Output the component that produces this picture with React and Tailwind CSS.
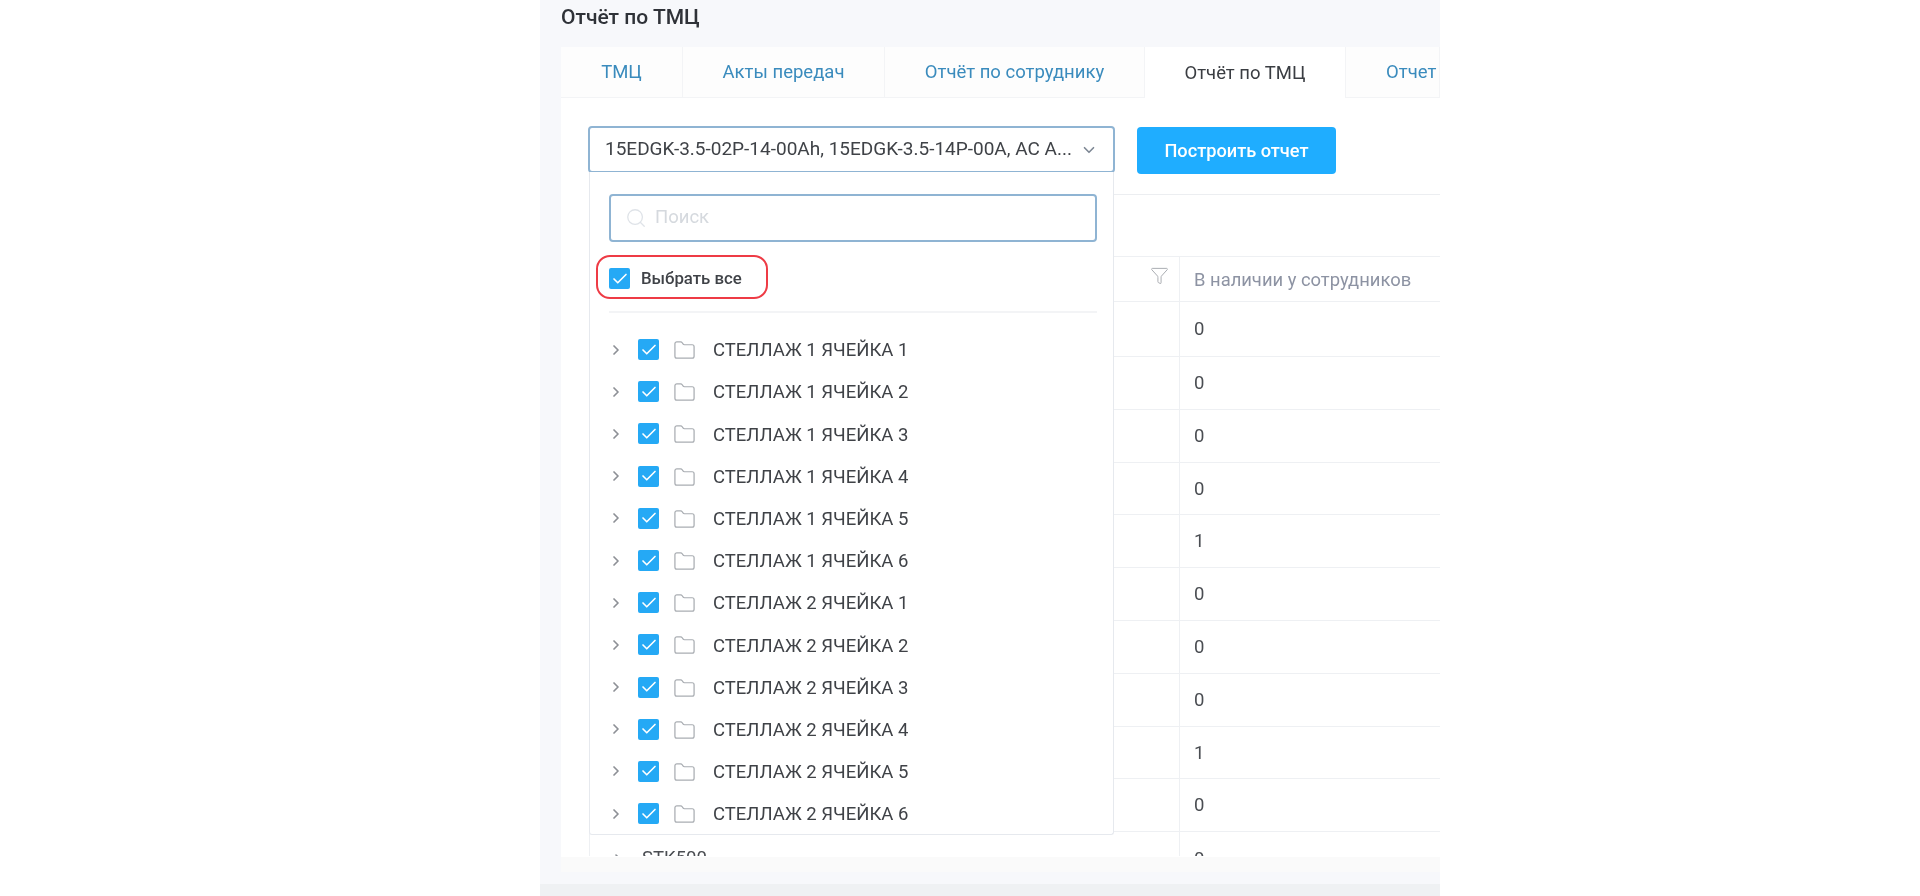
import React from "react";
import { ChevronDown, ChevronRight, Folder, Funnel, Search, Check } from "lucide-react";

const tabs = [
  { label: "ТМЦ", width: "w-[122px] justify-center" },
  { label: "Акты передач", width: "w-[202px] justify-center" },
  { label: "Отчёт по сотруднику", width: "w-[260px] justify-center" },
  { label: "Отчёт по ТМЦ", width: "w-[201px] justify-center", active: true },
  { label: "Отчет", width: "w-[94px] pl-[40px]" },
];

const values = [0, 0, 0, 0, 1, 0, 0, 0, 1, 0];

const shelves = [1, 2].flatMap((shelf) =>
  [1, 2, 3, 4, 5, 6].map((cell) => `СТЕЛЛАЖ ${shelf} ЯЧЕЙКА ${cell}`)
);

function Checkbox() {
  return (
    <span className="flex h-[21px] w-[21px] shrink-0 items-center justify-center rounded-[2px] bg-[#25a9f5]">
      <Check size={18} strokeWidth={2.2} className="text-white" />
    </span>
  );
}

function ShelfRow({ name }) {
  return (
    <div className="flex h-[42.2px] items-center">
      <ChevronRight size={16} strokeWidth={2.6} className="mb-[3px] ml-[-1px] shrink-0 text-[#8d9096]" />
      <span className="mb-[3px] ml-[14px]">
        <Checkbox />
      </span>
      <Folder size={23} strokeWidth={1.3} className="mb-[1px] ml-[14px] shrink-0 text-[#a9adb2]" />
      <span className="ml-[17px] text-[18.5px] text-[#3f4247]">{name}</span>
    </div>
  );
}

function Dropdown() {
  return (
    <div className="absolute left-0 top-[46px] z-10 h-[663px] w-[525px] rounded-b-[3px] border border-t-0 border-[#e6e9ee] bg-white px-[19px] pt-[22px]">
      <div className="flex h-[48px] w-[488px] items-center rounded-[4px] border-2 border-[#8fb4d3] pl-[14px]">
        <Search size={22} strokeWidth={1.4} className="text-[#dfe3e8]" />
        <span className="ml-[8px] text-[18.5px] text-[#d5d9de]">Поиск</span>
      </div>
      <div className="relative mt-[26px] flex h-[21px] items-center">
        <Checkbox />
        <span className="ml-[11px] text-[16.8px] font-medium text-[#3f4247]">Выбрать все</span>
        <div className="absolute left-[-13px] top-[-13px] h-[44px] w-[172px] rounded-[14px] border-2 border-[#ee3b45]" />
      </div>
      <div className="mt-[22px] h-[2px] w-[488px] bg-[#f3f4f6]" />
      <div className="mt-[17px]">
        {shelves.map((name) => (
          <ShelfRow key={name} name={name} />
        ))}
      </div>
    </div>
  );
}

function Table() {
  return (
    <div className="mt-[61px] h-[600px] overflow-hidden border-l border-t border-[#eef0f3] text-[#4a4d52]">
      <div className="flex h-[45px] border-b border-[#eef0f3]">
        <div className="flex w-[589px] shrink-0 items-start justify-end pr-[10px] pt-[9px]">
          <Funnel size={19} strokeWidth={1.2} className="text-[#a5a9ae]" />
        </div>
        <div className="flex items-center border-l border-[#eef0f3] pl-[14px] pt-[2px] text-[18.4px] text-[#8d93a3]">
          В наличии у сотрудников
        </div>
      </div>
      {values.map((value, i) => (
        <div key={i} className={`flex border-b border-[#eef0f3] ${i === 0 ? "h-[55px]" : "h-[52.8px]"}`}>
          <div className="w-[589px] shrink-0" />
          <div className="flex items-center border-l border-[#eef0f3] pl-[14px] pt-[2px] text-[18.5px]">{value}</div>
        </div>
      ))}
      <div className="flex h-[52.8px]">
        <div className="flex w-[589px] shrink-0 items-center pl-[20px]">
          <ChevronRight size={16} strokeWidth={2.4} className="text-[#8d9096]" />
          <span className="ml-[16px] text-[18.5px]">STK500</span>
        </div>
        <div className="flex items-center border-l border-[#eef0f3] pl-[14px] pt-[2px] text-[18.5px]">0</div>
      </div>
    </div>
  );
}

export default function App() {
  return (
    <div className="h-[896px] overflow-hidden bg-white pl-[540px] font-['Roboto',sans-serif]">
      <div className="flex h-full w-[900px] flex-col bg-[#f7f8fb] blur-[0.6px]">
        <h1 className="flex h-[47px] shrink-0 items-start pl-[21px] pt-[4px] text-[21px] font-medium leading-[26px] text-[#2f3238]">
          Отчёт по ТМЦ
        </h1>
        <div className="ml-[21px] flex h-[825px] shrink-0 flex-col overflow-hidden bg-white">
          <div className="flex h-[51px] shrink-0">
            {tabs.map((tab) => (
              <div
                key={tab.label}
                className={`flex shrink-0 items-center whitespace-nowrap border-r pt-[2px] text-[18.5px] ${tab.width} ${
                  tab.active
                    ? "border-[#f3f4f6] bg-white text-[#3a3d42]"
                    : "border-[#f3f4f6] border-b border-b-[#f3f4f6] bg-[#fdfdfd] text-[#3a8bbd]"
                }`}
              >
                {tab.label}
              </div>
            ))}
          </div>
          <div className="relative mt-[28px] min-h-0 flex-1 pl-[28px]">
            <div className="relative flex items-start">
              <div className="ml-[-1px] flex h-[47px] w-[527px] shrink-0 items-center justify-between rounded-[4px] border-2 border-[#8fb4d3] bg-white pl-[15px] pr-[15px]">
                <span className="whitespace-nowrap text-[19px] text-[#3f4247]">
                  15EDGK-3.5-02P-14-00Ah, 15EDGK-3.5-14P-00A, AC A...
                </span>
                <ChevronDown size={18} strokeWidth={2.2} className="shrink-0 text-[#7d8794]" />
              </div>
              <button className="ml-[22px] mt-[1px] flex h-[47px] w-[199px] items-center justify-center rounded-[4px] bg-[#1fadff] text-[18.2px] font-medium text-white">
                Построить отчет
              </button>
              <Dropdown />
            </div>
            <div className="mt-[20px] h-[1px] bg-[#eceef1]" />
            <Table />
          </div>
          <div className="h-[15px] shrink-0 bg-[#fafafa]" />
        </div>
        <div className="h-[12px] shrink-0" />
        <div className="h-[12px] shrink-0 bg-[#eff1f3]" />
      </div>
    </div>
  );
}
